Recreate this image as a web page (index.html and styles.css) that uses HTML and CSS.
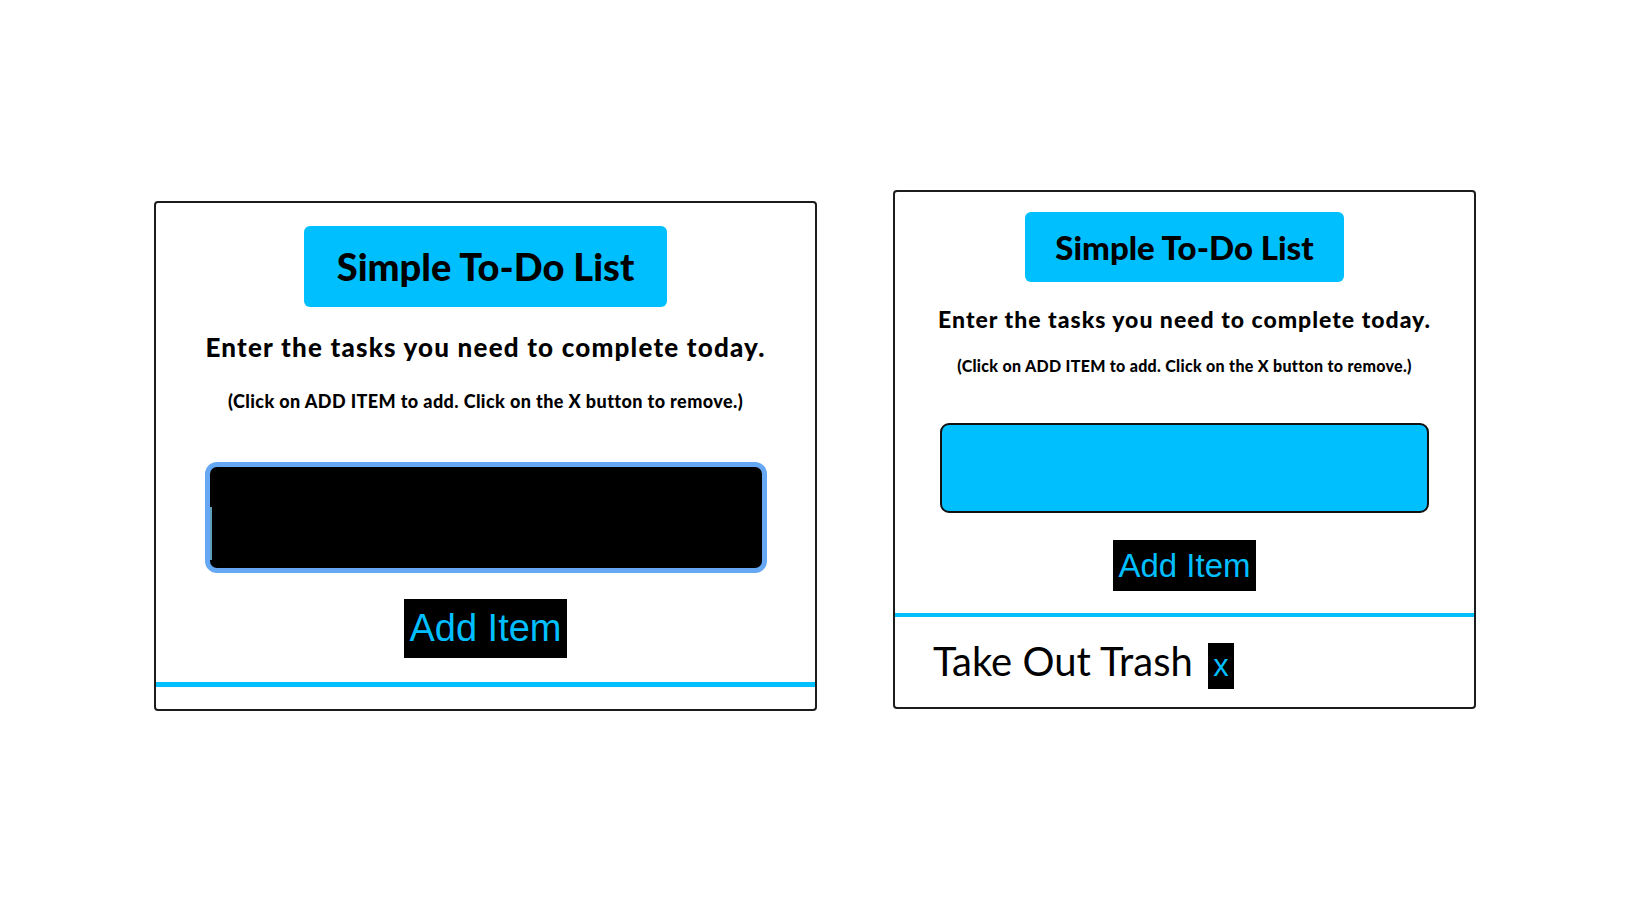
FILE: index.html
```html
<!DOCTYPE html>
<html lang="en">
<head>
<meta charset="utf-8">
<title>Simple To-Do List</title>
<link rel="stylesheet" href="styles.css">
</head>
<body>
<main class="stage">
  <section class="card card-large">
    <h1 class="title">Simple To-Do List</h1>
    <p class="lead">Enter the tasks you need to complete today.</p>
    <p class="hint">(Click on ADD ITEM to add. Click on the X button to remove.)</p>
    <div class="task-input focused"><span class="caret"></span></div>
    <button class="add-btn" type="button">Add Item</button>
    <div class="divider"></div>
  </section>

  <section class="card card-small">
    <h1 class="title">Simple To-Do List</h1>
    <p class="lead">Enter the tasks you need to complete today.</p>
    <p class="hint">(Click on ADD ITEM to add. Click on the X button to remove.)</p>
    <div class="task-input filled"></div>
    <button class="add-btn" type="button">Add Item</button>
    <div class="divider"></div>
    <ul class="task-list">
      <li class="task"><span class="task-text">Take Out Trash</span><button class="remove-btn" type="button">x</button></li>
    </ul>
  </section>
</main>
</body>
</html>
```

FILE: styles.css
```css
* { box-sizing: border-box; }

html, body {
  margin: 0;
  padding: 0;
  background: #ffffff;
}

body {
  font-family: Lato, "Noto Sans", sans-serif;
  color: #000;
}

.stage {
  display: flex;
  align-items: flex-start;
  gap: 76px;
  padding: 190px 0 0 154px;
}

.card {
  border: 2px solid #1c1c1c;
  border-radius: 4px;
  display: flex;
  flex-direction: column;
  align-items: center;
  background: #fff;
}

.title {
  margin: 0;
  background: #00bfff;
  border-radius: 6px;
  font-weight: 900;
  text-align: center;
}

.lead, .hint {
  margin: 0;
  font-weight: 900;
  text-align: center;
  white-space: nowrap;
}

.task-input {
  background: #00bfff;
  border: 2px solid #111;
  border-radius: 9px;
  display: flex;
  align-items: flex-start;
}

.task-input.focused {
  background: #000;
  border: 5px solid #66a8f4;
  border-radius: 12px;
}

.caret {
  display: block;
  width: 2px;
  height: 53px;
  margin-top: 40px;
  background: #5f9fb8;
}

.add-btn {
  border: 0;
  border-radius: 0;
  background: #000;
  color: #00bfff;
  font-family: "Liberation Sans", Arial, sans-serif;
  font-weight: 400;
  padding: 0;
  cursor: pointer;
}

.divider {
  align-self: stretch;
  background: #00bfff;
}

/* large (left) card */
.card-large {
  width: 663px;
  margin-top: 11px;
  padding: 23px 0 22px;
}
.card-large .title {
  width: 363px;
  height: 81px;
  font-size: 38px;
  line-height: 81px;
}
.card-large .lead {
  margin-top: 24px;
  font-size: 26px;
  line-height: 32px;
  letter-spacing: 1.2px;
}
.card-large .hint {
  margin-top: 27px;
  font-size: 18px;
  line-height: 22px;
  letter-spacing: 0.4px;
}
.card-large .task-input {
  margin-top: 50px;
  width: 562px;
  height: 111px;
}
.card-large .add-btn {
  margin-top: 26px;
  width: 163px;
  height: 59px;
  font-size: 38px;
  line-height: 59px;
}
.card-large .divider {
  margin-top: 24px;
  height: 5px;
}

/* small (right) card */
.card-small {
  width: 583px;
  padding: 20px 0 18px;
}
.card-small .title {
  width: 319px;
  height: 70px;
  font-size: 33px;
  line-height: 70px;
}
.card-small .lead {
  margin-top: 23px;
  font-size: 23px;
  line-height: 28px;
  letter-spacing: 1px;
}
.card-small .hint {
  margin-top: 23px;
  font-size: 16px;
  line-height: 20px;
  letter-spacing: 0.3px;
}
.card-small .task-input {
  margin-top: 47px;
  width: 489px;
  height: 90px;
}
.card-small .add-btn {
  margin-top: 27px;
  width: 143px;
  height: 51px;
  font-size: 33px;
  line-height: 51px;
}
.card-small .divider {
  margin-top: 22px;
  height: 4px;
}

.task-list {
  align-self: stretch;
  list-style: none;
  margin: 21px 0 0;
  padding: 0 0 0 38px;
}

.task {
  display: flex;
  align-items: baseline;
  gap: 15px;
}

.task-text {
  font-size: 40px;
  font-weight: 400;
  line-height: 46px;
}

.remove-btn {
  border: 0;
  background: #000;
  color: #00bfff;
  font-family: "Liberation Sans", Arial, sans-serif;
  font-size: 31px;
  line-height: 36px;
  padding: 5px 5px;
  width: 26px;
  cursor: pointer;
}
```
